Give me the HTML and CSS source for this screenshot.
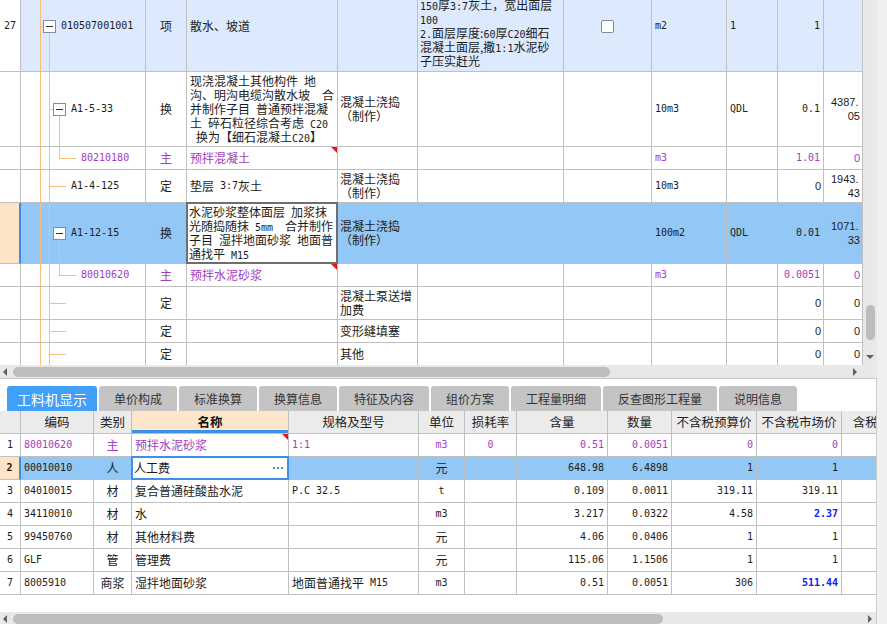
FILE: index.html
```html
<!DOCTYPE html>
<html lang="zh-CN">
<head>
<meta charset="utf-8">
<title>工料机显示</title>
<link rel="stylesheet" href="styles.css">
</head>
<body>
<div class="main">
  <section class="top-pane">
    <div class="top-body">
      <div class="viewport">
        <div class="tgrid">
          <div class="trow h91 r-lite">
            <div class="c num m">27</div>
            <div class="c tree lv1"><span class="ln v x19"></span><span class="ln hz x19 w3"></span><span class="ln vb x28"></span><span class="box bx22"></span><span class="m">010507001001</span></div>
            <div class="c ctr">项</div>
            <div class="c">散水、坡道</div>
            <div class="c"></div>
            <div class="c pl2"><div><span class="m">1.</span>垫层材料种类、厚度:<br><span class="m">150</span>厚<span class="m">3:7</span>灰土，宽出面层<br><span class="m">100</span><br><span class="m">2.</span>面层厚度:<span class="m">60</span>厚<span class="m">C20</span>细石<br>混凝土面层,撒<span class="m">1:1</span>水泥砂<br>子压实赶光</div></div>
            <div class="c ctr"><span class="chk"></span></div>
            <div class="c m">m2</div>
            <div class="c m">1</div>
            <div class="c rt m">1</div>
            <div class="c"></div>
          </div>
          <div class="trow h75">
            <div class="c num"></div>
            <div class="c tree lv2"><span class="ln v x19"></span><span class="ln v x28"></span><span class="ln hz x28 w4"></span><span class="ln vb x38"></span><span class="box bx32"></span><span class="m">A1-5-33</span></div>
            <div class="c ctr">换</div>
            <div class="c"><div>现浇混凝土其他构件&ensp;地<br>沟、明沟电缆沟散水坡&ensp;&ensp;合<br>并制作子目&ensp;普通预拌混凝<br>土&ensp;碎石粒径综合考虑&ensp;<span class="m">C20</span><br>&ensp;换为【细石混凝土<span class="m">C20</span>】</div></div>
            <div class="c pl2"><div>混凝土浇捣<br>（制作）</div></div>
            <div class="c"></div>
            <div class="c"></div>
            <div class="c m">10m3</div>
            <div class="c m">QDL</div>
            <div class="c rt m">0.1</div>
            <div class="c wc"><div class="wn"><span class="wn-a">4387.</span><span class="wn-b">05</span></div></div>
          </div>
          <div class="trow h23 purple">
            <div class="c num"></div>
            <div class="c tree lv3"><span class="ln v x19"></span><span class="ln v x28"></span><span class="ln vt x38"></span><span class="ln hz x38 w17"></span><span class="m">80210180</span></div>
            <div class="c ctr">主</div>
            <div class="c">预拌混凝土<span class="tri"></span></div>
            <div class="c"></div>
            <div class="c"></div>
            <div class="c"></div>
            <div class="c m">m3</div>
            <div class="c"></div>
            <div class="c rt m">1.01</div>
            <div class="c rt sn">0</div>
          </div>
          <div class="trow h33">
            <div class="c num"></div>
            <div class="c tree lv2"><span class="ln v x19"></span><span class="ln v x28"></span><span class="ln hz x28 w17"></span><span class="m">A1-4-125</span></div>
            <div class="c ctr">定</div>
            <div class="c">垫层&ensp;<span class="m">3:7</span>灰土</div>
            <div class="c pl2"><div>混凝土浇捣<br>（制作）</div></div>
            <div class="c"></div>
            <div class="c"></div>
            <div class="c m">10m3</div>
            <div class="c"></div>
            <div class="c rt sn">0</div>
            <div class="c wc"><div class="wn"><span class="wn-a">1943.</span><span class="wn-b">43</span></div></div>
          </div>
          <div class="trow h61 r-sel">
            <div class="c num"></div>
            <div class="c tree lv2"><span class="ln v x19"></span><span class="ln v x28"></span><span class="ln hz x28 w4"></span><span class="ln vb x38"></span><span class="box bx32"></span><span class="m">A1-12-15</span></div>
            <div class="c ctr">换</div>
            <div class="c editcell"><div class="editor dark"><div>水泥砂浆整体面层&ensp;加浆抹<br>光随捣随抹&ensp;<span class="m">5mm</span>&ensp;&ensp;合并制作<br>子目&ensp;湿拌地面砂浆&ensp;地面普<br>通找平&ensp;<span class="m">M15</span></div></div></div>
            <div class="c pl2"><div>混凝土浇捣<br>（制作）</div></div>
            <div class="c"></div>
            <div class="c"></div>
            <div class="c m">100m2</div>
            <div class="c m">QDL</div>
            <div class="c rt m">0.01</div>
            <div class="c wc"><div class="wn"><span class="wn-a">1071.</span><span class="wn-b">33</span></div></div>
          </div>
          <div class="trow h23 purple">
            <div class="c num"></div>
            <div class="c tree lv3"><span class="ln v x19"></span><span class="ln v x28"></span><span class="ln vt x38"></span><span class="ln hz x38 w17"></span><span class="m">80010620</span></div>
            <div class="c ctr">主</div>
            <div class="c">预拌水泥砂浆<span class="tri"></span></div>
            <div class="c"></div>
            <div class="c"></div>
            <div class="c"></div>
            <div class="c m">m3</div>
            <div class="c"></div>
            <div class="c rt m">0.0051</div>
            <div class="c rt sn">0</div>
          </div>
          <div class="trow h33">
            <div class="c num"></div>
            <div class="c tree lv2"><span class="ln v x19"></span><span class="ln v x28"></span><span class="ln hz x28 w17"></span></div>
            <div class="c ctr">定</div>
            <div class="c"></div>
            <div class="c pl2"><div>混凝土泵送增<br>加费</div></div>
            <div class="c"></div>
            <div class="c"></div>
            <div class="c"></div>
            <div class="c"></div>
            <div class="c rt sn">0</div>
            <div class="c rt sn">0</div>
          </div>
          <div class="trow h23">
            <div class="c num"></div>
            <div class="c tree lv2"><span class="ln v x19"></span><span class="ln v x28"></span><span class="ln hz x28 w17"></span></div>
            <div class="c ctr">定</div>
            <div class="c"></div>
            <div class="c pl2">变形缝填塞</div>
            <div class="c"></div>
            <div class="c"></div>
            <div class="c"></div>
            <div class="c"></div>
            <div class="c rt sn">0</div>
            <div class="c rt sn">0</div>
          </div>
          <div class="trow h23">
            <div class="c num"></div>
            <div class="c tree lv2"><span class="ln v x19"></span><span class="ln v x28"></span><span class="ln hz x28 w17"></span></div>
            <div class="c ctr">定</div>
            <div class="c"></div>
            <div class="c pl2">其他</div>
            <div class="c"></div>
            <div class="c"></div>
            <div class="c"></div>
            <div class="c"></div>
            <div class="c rt sn">0</div>
            <div class="c rt sn">0</div>
          </div>
        </div>
      </div>
      <div class="vs">
        <span class="thumb-v"></span>
        <span class="arr-d"></span>
      </div>
    </div>
    <div class="hs-row">
      <div class="hs hs-top">
        <span class="arr-l"></span>
        <span class="thumb-h thumb-top"></span>
        <span class="arr-r"></span>
      </div>
      <div class="corner"></div>
    </div>
  </section>

  <section class="bottom">
    <nav class="tabs">
      <span class="tab active">工料机显示</span>
      <span class="tab">单价构成</span>
      <span class="tab">标准换算</span>
      <span class="tab">换算信息</span>
      <span class="tab">特征及内容</span>
      <span class="tab">组价方案</span>
      <span class="tab">工程量明细</span>
      <span class="tab">反查图形工程量</span>
      <span class="tab">说明信息</span>
    </nav>
    <div class="bgrid">
      <div class="brow bh">
        <div class="c"></div>
        <div class="c">编码</div>
        <div class="c">类别</div>
        <div class="c hcur">名称</div>
        <div class="c">规格及型号</div>
        <div class="c">单位</div>
        <div class="c">损耗率</div>
        <div class="c">含量</div>
        <div class="c">数量</div>
        <div class="c">不含税预算价</div>
        <div class="c">不含税市场价</div>
        <div class="c">含税预算价</div>
      </div>
      <div class="brow purple">
        <div class="c num m">1</div>
        <div class="c m">80010620</div>
        <div class="c ctr">主</div>
        <div class="c">预拌水泥砂浆<span class="tri"></span></div>
        <div class="c m">1:1</div>
        <div class="c ctr m">m3</div>
        <div class="c ctr m">0</div>
        <div class="c rt m">0.51</div>
        <div class="c rt m">0.0051</div>
        <div class="c rt m">0</div>
        <div class="c rt m">0</div>
        <div class="c"></div>
      </div>
      <div class="brow r-sel">
        <div class="c num m bold">2</div>
        <div class="c m">00010010</div>
        <div class="c ctr">人</div>
        <div class="c editcell"><div class="editor blue"><span>人工费</span><span class="dots"><i></i><i></i><i></i></span></div></div>
        <div class="c"></div>
        <div class="c ctr">元</div>
        <div class="c"></div>
        <div class="c rt m">648.98</div>
        <div class="c rt m">6.4898</div>
        <div class="c rt m">1</div>
        <div class="c rt m">1</div>
        <div class="c"></div>
      </div>
      <div class="brow">
        <div class="c num m">3</div>
        <div class="c m">04010015</div>
        <div class="c ctr">材</div>
        <div class="c">复合普通硅酸盐水泥</div>
        <div class="c m">P.C 32.5</div>
        <div class="c ctr m">t</div>
        <div class="c"></div>
        <div class="c rt m">0.109</div>
        <div class="c rt m">0.0011</div>
        <div class="c rt m">319.11</div>
        <div class="c rt m">319.11</div>
        <div class="c"></div>
      </div>
      <div class="brow">
        <div class="c num m">4</div>
        <div class="c m">34110010</div>
        <div class="c ctr">材</div>
        <div class="c">水</div>
        <div class="c"></div>
        <div class="c ctr m">m3</div>
        <div class="c"></div>
        <div class="c rt m">3.217</div>
        <div class="c rt m">0.0322</div>
        <div class="c rt m">4.58</div>
        <div class="c rt m bb">2.37</div>
        <div class="c"></div>
      </div>
      <div class="brow">
        <div class="c num m">5</div>
        <div class="c m">99450760</div>
        <div class="c ctr">材</div>
        <div class="c">其他材料费</div>
        <div class="c"></div>
        <div class="c ctr">元</div>
        <div class="c"></div>
        <div class="c rt m">4.06</div>
        <div class="c rt m">0.0406</div>
        <div class="c rt m">1</div>
        <div class="c rt m">1</div>
        <div class="c"></div>
      </div>
      <div class="brow">
        <div class="c num m">6</div>
        <div class="c m">GLF</div>
        <div class="c ctr">管</div>
        <div class="c">管理费</div>
        <div class="c"></div>
        <div class="c ctr">元</div>
        <div class="c"></div>
        <div class="c rt m">115.06</div>
        <div class="c rt m">1.1506</div>
        <div class="c rt m">1</div>
        <div class="c rt m">1</div>
        <div class="c"></div>
      </div>
      <div class="brow">
        <div class="c num m">7</div>
        <div class="c m">8005910</div>
        <div class="c ctr">商浆</div>
        <div class="c">湿拌地面砂浆</div>
        <div class="c">地面普通找平&ensp;<span class="m">M15</span></div>
        <div class="c ctr m">m3</div>
        <div class="c"></div>
        <div class="c rt m">0.51</div>
        <div class="c rt m">0.0051</div>
        <div class="c rt m">306</div>
        <div class="c rt m bb">511.44</div>
        <div class="c"></div>
      </div>
    </div>
    <div class="hs hs-bot">
      <span class="arr-l"></span>
      <span class="thumb-h thumb-bot"></span>
      <span class="arr-r"></span>
    </div>
  </section>
</div>
<div class="edge"></div>
</body>
</html>
```

FILE: styles.css
```css
* { box-sizing: border-box; }
html, body { margin: 0; padding: 0; }
body {
  width: 887px;
  height: 624px;
  overflow: hidden;
  display: flex;
  background: #f0f0f0;
  font-family: "Noto Sans CJK SC", "Noto Sans", sans-serif;
  font-size: 12px;
  color: #1c1c1c;
}
.main {
  width: 877px;
  height: 624px;
  display: flex;
  flex-direction: column;
  background: #fff;
  overflow: hidden;
}
.edge { width: 10px; background: #f0f0f0; }

/* ---------- top pane ---------- */
.top-pane { border-bottom: 1px solid #c8c8c8; }
.top-body { display: flex; height: 365px; }
.viewport { width: 863px; overflow: hidden; }
.tgrid { margin-top: -19px; }
.trow {
  display: grid;
  grid-template-columns: 21px 125px 41px 151px 80px 146px 88px 75px 51px 46px 39px;
}
.h91 { height: 91px; }
.h75 { height: 75px; }
.h61 { height: 61px; }
.h33 { height: 33px; }
.h23 { height: 23px; }

.c {
  position: relative;
  display: flex;
  align-items: center;
  padding: 0 3px;
  border-right: 1px solid #c0c0c0;
  border-bottom: 1px solid #c0c0c0;
  overflow: hidden;
  white-space: nowrap;
  line-height: 14px;
}
.ctr { justify-content: center; }
.rt { justify-content: flex-end; }
.pl2 { padding-left: 2px; }
.num { justify-content: center; padding: 0; }
.m { font-family: "DejaVu Sans Mono", monospace; font-size: 10px; line-height: 10px; }
.sn { font-family: "Liberation Sans", sans-serif; font-size: 11px; padding-right: 2px; }
.bold { font-weight: bold; }
.purple .c:not(.num) { color: #a23cc2; }

.r-lite .c:not(.num) { background: #dde9fc; }
.r-sel .c { background: #93c7f5; }
.r-sel .num { background: #fde4c6; border-right: 2px solid #3a8ee6; }

/* tree */
.tree { padding-left: 40px; }
.lv2 { padding-left: 50px; }
.lv3 { padding-left: 60px; }
.ln { position: absolute; background: #f6c07c; }
.v { top: 0; bottom: 0; width: 1px; }
.vt { top: 0; height: 50%; width: 1px; }
.vb { top: 50%; bottom: 0; width: 1px; }
.hz { top: 50%; height: 1px; }
.x19 { left: 19px; }
.x28 { left: 28px; }
.x38 { left: 38px; }
.w3 { width: 3px; }
.w4 { width: 4px; }
.w17 { width: 17px; }
.box {
  position: absolute;
  top: 50%;
  margin-top: -6px;
  width: 13px;
  height: 13px;
  border: 1px solid #8c8c8c;
  background: #fff;
}
.box::after {
  content: "";
  position: absolute;
  left: 2px;
  right: 2px;
  top: 5px;
  height: 1px;
  background: #333;
}
.bx22 { left: 22px; }
.bx32 { left: 32px; }

.chk {
  width: 13px;
  height: 13px;
  border: 1px solid #8a8a8a;
  border-radius: 2px;
  background: #fff;
}
.tri {
  position: absolute;
  top: 0;
  right: 0;
  width: 6px;
  height: 6px;
  background: #e8141a;
  clip-path: polygon(0 0, 100% 0, 100% 100%);
}

.wc { padding: 0 2px; }
.wn {
  width: 100%;
  display: flex;
  flex-direction: column;
  font-family: "Liberation Sans", sans-serif;
  font-size: 11px;
  line-height: 14px;
  color: #1c1c1c;
}
.wn-a { align-self: flex-start; padding-left: 5px; }
.wn-b { align-self: flex-end; }

.editcell { overflow: visible; z-index: 1; }
.editor {
  position: absolute;
  top: -1px;
  left: -1px;
  right: -1px;
  bottom: -1px;
  display: flex;
  align-items: center;
  padding: 0 1px;
  background: #fff;
  color: #1c1c1c;
  overflow: hidden;
}
.editor.dark { border: 2px solid #6e6e6e; }
.editor.blue { border: 2px solid #3d8fea; justify-content: space-between; padding-right: 4px; }
.dots { display: flex; gap: 2px; }
.dots i { width: 2px; height: 2px; background: #4a88d0; }

/* scrollbars */
.vs {
  width: 14px;
  background: #e8e8e8;
  display: flex;
  flex-direction: column;
  align-items: center;
  justify-content: flex-end;
  padding-bottom: 6px;
}
.thumb-v {
  width: 9px;
  height: 35px;
  border-radius: 5px;
  background: #bdbdbd;
  margin-bottom: 15px;
}
.arr-d {
  width: 0;
  height: 0;
  border-left: 4px solid transparent;
  border-right: 4px solid transparent;
  border-top: 4px solid #606060;
}
.hs-row { display: flex; height: 13px; }
.hs {
  display: flex;
  align-items: center;
  background: #e8e8e8;
}
.hs-top { width: 863px; height: 13px; }
.corner { width: 14px; background: #e8e8e8; }
.arr-l {
  width: 0;
  height: 0;
  border-top: 4px solid transparent;
  border-bottom: 4px solid transparent;
  border-right: 4px solid #606060;
  margin-left: 3px;
}
.arr-r {
  width: 0;
  height: 0;
  border-top: 4px solid transparent;
  border-bottom: 4px solid transparent;
  border-left: 4px solid #606060;
  margin-left: auto;
  margin-right: 6px;
}
.thumb-h {
  height: 10px;
  border-radius: 5px;
  background: #bdbdbd;
  margin-left: 6px;
}
.thumb-top { width: 597px; }
.thumb-bot { width: 650px; }
.hs-bot {
  height: 14px;
  margin-top: auto;
  margin-bottom: -2px;
}
.hs-bot .arr-r { margin-right: 4px; }

/* ---------- bottom pane ---------- */
.bottom {
  flex: 1;
  display: flex;
  flex-direction: column;
  padding-top: 7px;
  border-right: 1px solid #cccccc;
  min-height: 0;
}
.tabs {
  display: flex;
  gap: 2px;
  padding-left: 7px;
  height: 25px;
}
.tab {
  display: flex;
  align-items: center;
  justify-content: center;
  padding: 0 15px;
  background: #c4c4c4;
  color: #333;
  border-radius: 3px 3px 0 0;
  font-size: 12px;
}
.tab.active {
  background: #40a0f8;
  color: #fff;
  font-size: 14px;
  padding: 0 10px;
}
.bgrid { width: 876px; overflow: hidden; }
.brow {
  display: grid;
  grid-template-columns: 21px 73px 38px 157px 130px 46px 52px 91px 64px 85px 85px 85px;
  height: 23px;
  width: max-content;
}
.bh .c {
  background: #ebebeb;
  justify-content: center;
  color: #222;
  font-size: 12.5px;
}
.bh .hcur {
  background: #fde6c9;
  font-weight: bold;
  color: #111;
  box-shadow: inset 0 -3px 0 #3d8fea;
}
.bb { color: #0b22f0; font-weight: bold; }
```
